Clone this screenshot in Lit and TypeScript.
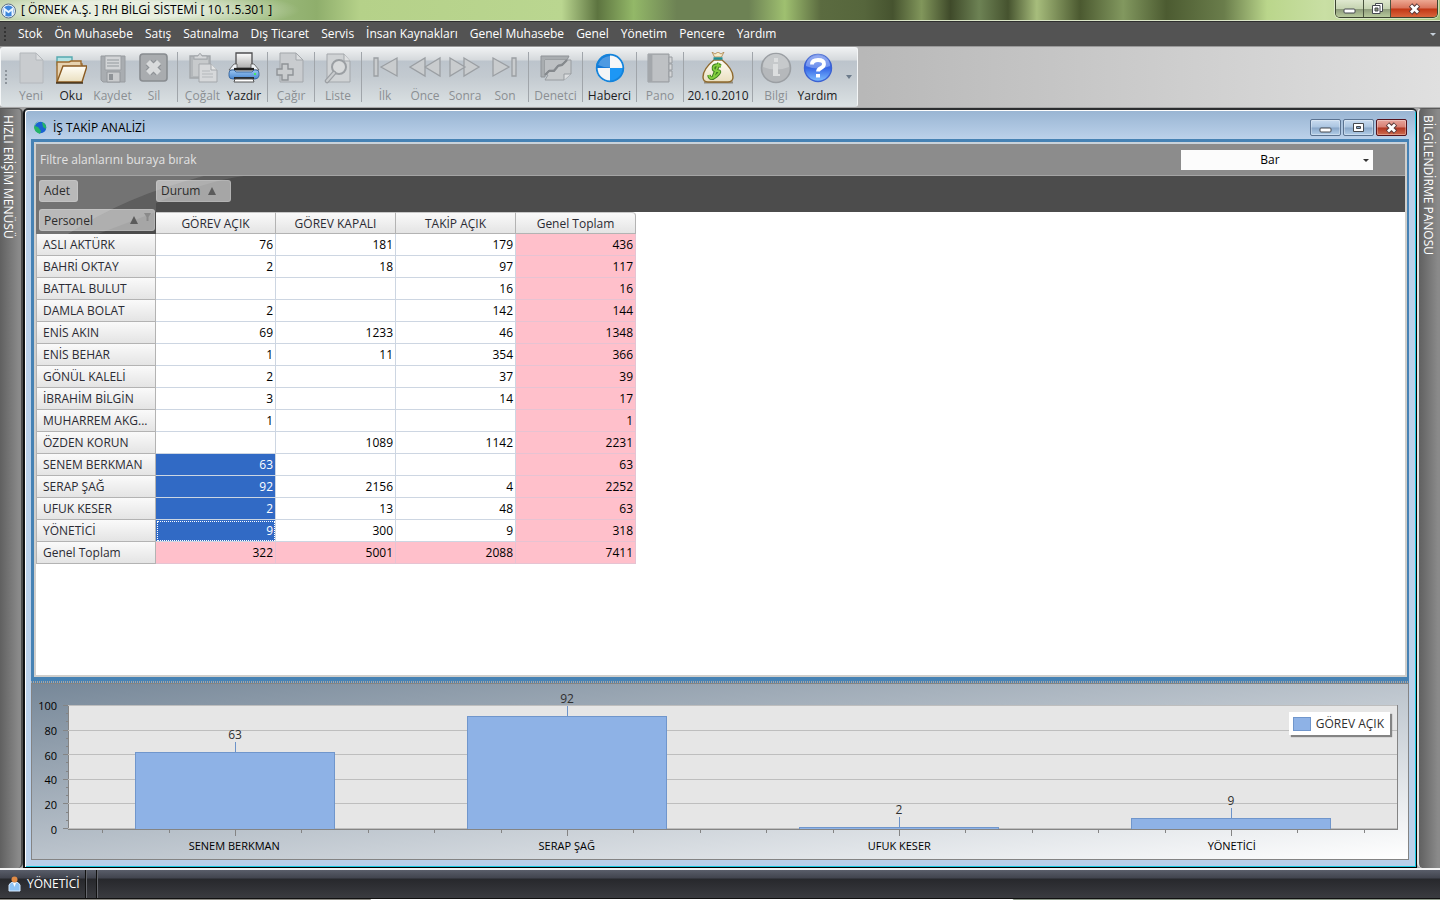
import { LitElement, html, css, svg } from "lit";
import { customElement } from "lit/decorators.js";
import { classMap } from "lit/directives/class-map.js";

const MENU = ["Stok", "Ön Muhasebe", "Satış", "Satınalma", "Dış Ticaret", "Servis", "İnsan Kaynakları", "Genel Muhasebe", "Genel", "Yönetim", "Pencere", "Yardım"];

type Tool = { id: string; label: string; size: string; on?: boolean };
const GROUPS: Tool[][] = [
  [
    { id: "new", label: "Yeni", size: "s" },
    { id: "open", label: "Oku", size: "s", on: true },
    { id: "save", label: "Kaydet", size: "m" },
    { id: "del", label: "Sil", size: "s" },
  ],
  [
    { id: "copy", label: "Çoğalt", size: "m" },
    { id: "print", label: "Yazdır", size: "s", on: true },
  ],
  [{ id: "call", label: "Çağır", size: "s" }],
  [{ id: "list", label: "Liste", size: "s" }],
  [
    { id: "first", label: "İlk", size: "s" },
    { id: "prev", label: "Önce", size: "s" },
    { id: "next", label: "Sonra", size: "s" },
    { id: "last", label: "Son", size: "s" },
  ],
  [{ id: "audit", label: "Denetci", size: "l" }],
  [{ id: "news", label: "Haberci", size: "l", on: true }],
  [{ id: "board", label: "Pano", size: "s" }],
  [{ id: "money", label: "20.10.2010", size: "xl", on: true }],
  [
    { id: "info", label: "Bilgi", size: "s" },
    { id: "help", label: "Yardım", size: "m", on: true },
  ],
];

const G = "#a3a7ab";
const F = "#c9ccce";
const ICONS: Record<string, unknown> = {
  new: svg`<path d="M5 1h16l7 7v23H5z" fill="#c9cccf" stroke="#b4b8bc"/><path d="M21 1v7h7z" fill="#dcdee0" stroke="#b4b8bc"/>`,
  open: svg`<path d="M2 5h15v8H2z" fill="#b5e3e4" stroke="#55a9b0" stroke-width="1.4"/><path d="M2 10h12l2-1h10v3h1v18H2z" fill="#e6d2b0" stroke="#9c6a2c" stroke-width="1.4"/><path d="M8 14h24l-5 16H2z" fill="url(#cream)" stroke="#8a5a20" stroke-width="1.4"/><path d="M1 31h27" stroke="#3b2c18" stroke-width="1.4"/>`,
  save: svg`<path d="M4 4h24v26H6l-2-2z" fill="#a9adb1" stroke="#989ca0"/><path d="M8 4h16v14H8z" fill="#d3d5d7" stroke="#9b9fa3"/><path d="M10 8h12M10 11h12M10 14h12" stroke="#a9adb1" stroke-width="1.3"/><path d="M10 20h13v10H10z" fill="#c9cbcd" stroke="#94989c"/><path d="M12 22h4v6h-4z" fill="#8f9397"/>`,
  del: svg`<rect x="2" y="2" width="27" height="27" rx="3" fill="#a9acaf" stroke="#888c90" stroke-width="1.6"/><path d="M10.500 10.500l10 10M20.500 10.500l-10 10" stroke="#8e9296" stroke-width="8"/><path d="M10 10l11 11M21 10L10 21" stroke="#d9dbdc" stroke-width="5.600"/>`,
  copy: svg`<path d="M3 4h20v22H3z" fill="#b4b8bb" stroke="${G}" stroke-width="1.4"/><path d="M7 7V4h4q2-5 4 0h5v3z" fill="#d5d7d9" stroke="${G}"/><path d="M6 8h15v16H6z" fill="#c7cacc"/><path d="M12 12h12l6 6v12H12z" fill="#d6d8da" stroke="${G}"/><path d="M24 12v6h6" fill="#e4e5e6" stroke="${G}"/><path d="M15 19h8M15 22h11M15 25h11" stroke="#b4b8bb"/>`,
  print: svg`<path d="M8 1h16v16H8z" fill="url(#grayv)" stroke="#4e4e50" stroke-width="1.3"/><path d="M6 12h3v4h14v-4h3l5 6H1z" fill="#eef2f6" stroke="#555" stroke-width=".8"/><path d="M6 17h20" stroke="#222" stroke-width="2.200"/><path d="M1 21q0-3 3-3h2l2 2h16l2-2h2q3 0 3 3v3q-1 3-4 3H5q-4 0-4-3z" fill="url(#blueb)" stroke="#2b5b95" stroke-width=".8"/><circle cx="27" cy="22" r="1" fill="#3f3"/><path d="M6 26h20" stroke="#222" stroke-width="1.800"/><path d="M7 27h18l1 3H6z" fill="#fff" stroke="#555"/>`,
  call: svg`<path d="M5 1h16l7 7v22H5z" fill="#c9cccf" stroke="${G}"/><path d="M21 1v7h7z" fill="#dcdee0" stroke="${G}"/><path d="M7 12h6v5h5v6h-5v5H7v-5H2v-6h5z" fill="${F}" stroke="#8f9397" stroke-width="1.4"/>`,
  list: svg`<path d="M5 2h17l6 7v21H5z" fill="#d0d3d5" stroke="${G}"/><path d="M22 2v7h6" fill="#e0e2e3" stroke="${G}"/><circle cx="17" cy="15" r="7" fill="#d8dadb" stroke="#9b9fa3" stroke-width="2"/><path d="M12 21l-7 8" stroke="#9b9fa3" stroke-width="4.500" stroke-linecap="round"/><path d="M12 21l-7 8" stroke="${F}" stroke-width="2" stroke-linecap="round"/>`,
  first: svg`<path d="M5 6h4v18H5zM12 15L28 6v18z" fill="${F}" stroke="#9b9fa3" stroke-width="1.300"/>`,
  prev: svg`<path d="M1 15L16 6v18zM16 15L31 6v18z" fill="${F}" stroke="#9b9fa3" stroke-width="1.300"/>`,
  next: svg`<path d="M1 6l15 9-15 9zM15 6l15 9-15 9z" fill="${F}" stroke="#9b9fa3" stroke-width="1.300"/>`,
  last: svg`<path d="M4 6l16 9-16 9zM23 6h4v18h-4z" fill="${F}" stroke="#9b9fa3" stroke-width="1.300"/>`,
  audit: svg`<path d="M1 4h28l-2 4H5v17H1z" fill="#a9adb0" stroke="#8f9397"/><path d="M5 8h21l-4 4-4 1-4 5-5 0-4 4z" fill="#bdc0c3"/><path d="M5 22l4-4h5l4-5 4-1 4-4h5v14l-7 6H5l3-5z" fill="#c6c9cb" stroke="#989ca0"/><path d="M5 23l4-4h5l4-5 4-1 5-5" fill="none" stroke="#85898d" stroke-width="2.200"/><path d="M24 28v-6h7" fill="#dcdee0" stroke="#989ca0"/>`,
  news: svg`<circle cx="16" cy="16" r="14" fill="#eef1f4"/><path d="M16 2A14 14 0 0 0 2 16h14z" fill="#1378d8"/><path d="M16 2A14 14 0 0 1 30 16H16zM2 16h14v14A14 14 0 0 1 2 16z" fill="#f4f5f6"/><path d="M16 30a14 14 0 0 0 14-14H16z" fill="#1d97f5"/><circle cx="16" cy="16" r="13.300" fill="none" stroke="#1583da" stroke-width="1.800"/><path d="M4 13a12.500 12.500 0 0 1 24 0q-12 5-24 0z" fill="#fff" opacity=".25"/>`,
  board: svg`<path d="M4 2h21v28H4z" fill="#b3b6b9" stroke="#989ca0"/><path d="M4 2h4v28H4z" fill="#a3a7ab"/><path d="M9 3h15v26H9z" fill="#bec1c4"/><path d="M25 5h3v6h-3zM25 12h3v6h-3zM25 19h3v6h-3z" fill="#d4d6d8" stroke="#989ca0"/>`,
  money: svg`<path d="M2 30.500h29" stroke="#5b4a2a" stroke-width="2" opacity=".5"/><path d="M10 0l2.500 5h7L22 0l-3 2-3-2-3 2z" fill="#f7ecc9" stroke="#a8824a" stroke-width=".8"/><path d="M12 8Q1 17 1 25q0 5 5 5h20q5 0 5-5Q31 17 20 8z" fill="url(#cream)" stroke="#8f6a2e" stroke-width="1.400"/><path d="M11.500 6.500h9" stroke="#1d8f93" stroke-width="2.400"/><path d="M19 14q-7-2-7.500 1.500t4 3.500-1.500 5-7-1M17 11L11 26" fill="none" stroke="#3d7d1e" stroke-width="3.600"/><path d="M19 14q-7-2-7.500 1.500t4 3.500-1.500 5-7-1M17 11L11 26" fill="none" stroke="#84cf3f" stroke-width="1.800"/>`,
  info: svg`<circle cx="16" cy="16" r="14.500" fill="#b5b8bb" stroke="#9b9fa3" stroke-width="1.600"/><path d="M3 15a13 13 0 0 1 26 0q-13 5-26 0z" fill="#c6c9cb"/><path d="M14 6h4v4h-4zM13 12h5v10h2v2h-7z" fill="#dcdedf"/>`,
  help: svg`<circle cx="16" cy="16" r="13.500" fill="url(#ball)" stroke="#3c62d2" stroke-width="1.400"/><path d="M4 14a12 12 0 0 1 24 0q-12 5-24 0z" fill="#fff" opacity=".28"/><path d="M10 12.500q0-4.500 6-4.500t6 4q0 2.500-3 4t-3 3.500" fill="none" stroke="#fff" stroke-width="3.800"/><path d="M14 22h4v3.500h-4z" fill="#fff"/>`,
};

const COLS = ["GÖREV AÇIK", "GÖREV KAPALI", "TAKİP AÇIK", "Genel Toplam"];
const ROWS: [string, string[]][] = [
  ["ASLI AKTÜRK", ["76", "181", "179", "436"]],
  ["BAHRİ OKTAY", ["2", "18", "97", "117"]],
  ["BATTAL BULUT", ["", "", "16", "16"]],
  ["DAMLA BOLAT", ["2", "", "142", "144"]],
  ["ENİS AKIN", ["69", "1233", "46", "1348"]],
  ["ENİS BEHAR", ["1", "11", "354", "366"]],
  ["GÖNÜL KALELİ", ["2", "", "37", "39"]],
  ["İBRAHİM BİLGİN", ["3", "", "14", "17"]],
  ["MUHARREM AKG...", ["1", "", "", "1"]],
  ["ÖZDEN KORUN", ["", "1089", "1142", "2231"]],
  ["SENEM BERKMAN", ["63", "", "", "63"]],
  ["SERAP ŞAĞ", ["92", "2156", "4", "2252"]],
  ["UFUK KESER", ["2", "13", "48", "63"]],
  ["YÖNETİCİ", ["9", "300", "9", "318"]],
  ["Genel Toplam", ["322", "5001", "2088", "7411"]],
];
const SELECTED = [10, 11, 12, 13];
const BARS = SELECTED.map((i) => ({ name: ROWS[i][0], value: Number(ROWS[i][1][0]) }));

@customElement("rh-toolbar")
class RhToolbar extends LitElement {
  static styles = css`
    :host { display: flex; background: linear-gradient(90deg, #a8a8a8, #b8b8b8 60%, #e0e0e0); }
    .bar { display: flex; align-items: stretch; height: 60px; box-sizing: border-box; border: 1px solid #f4f6f7; border-bottom-color: #d8dcdf; border-radius: 3px; padding-right: 4px; background: linear-gradient(#eff1f2 0, #d5d9dc 12px, #bcc4cc 13px, #c3cad0 50%, #dbe1e3 100%); }
    .grip { width: 10px; display: flex; align-items: center; }
    .grip svg { width: 7px; height: 16px; }
    .sep { width: 1px; margin: 4px 3px; background: #a0a5aa; }
    button { display: flex; flex-direction: column; align-items: center; gap: 3px; border: 0; padding: 4px 0 0; background: none; font: inherit; line-height: 18px; white-space: nowrap; color: #8b8f93; }
    button.on { color: #1d1d1f; }
    .s { width: 40px; } .m { width: 43px; } .l { width: 47px; } .xl { width: 62px; }
    .ico { width: 32px; height: 32px; display: block; }
    .more { width: 8px; margin-left: 6px; padding: 0; justify-content: center; }
    .more svg { width: 6px; height: 4px; }
  `;
  render() {
    const defs = svg`<defs>
      <linearGradient id="cream" x1="0" y1="0" x2="0" y2="1"><stop offset="0" stop-color="#fffdf6"/><stop offset="1" stop-color="#eadfbf"/></linearGradient>
      <linearGradient id="grayv" x1="0" y1="0" x2="0" y2="1"><stop offset="0" stop-color="#fdfdfd"/><stop offset="1" stop-color="#a9a9a9"/></linearGradient>
      <linearGradient id="blueb" x1="0" y1="0" x2="0" y2="1"><stop offset="0" stop-color="#9cc6f2"/><stop offset="1" stop-color="#4887d0"/></linearGradient>
      <linearGradient id="ball" x1="0" y1="0" x2="0" y2="1"><stop offset="0" stop-color="#6f8fee"/><stop offset=".5" stop-color="#3565e6"/><stop offset="1" stop-color="#7fc0ff"/></linearGradient></defs>`;
    return html`<div class="bar" role="toolbar" aria-label="Araçlar">
      <span class="grip"><svg viewBox="0 0 7 16"><path d="M4 1h2v2H4zM4 5h2v2H4zM4 9h2v2H4zM4 13h2v2H4z" fill="#8d949b"/></svg></span>
      ${GROUPS.map((g, i) => html`${i ? html`<span class="sep"></span>` : ""}${g.map((t) => html`
        <button type="button" class=${classMap({ [t.size]: true, on: !!t.on })} ?disabled=${!t.on}>
          <svg class="ico" viewBox="0 0 32 32">${defs}${ICONS[t.id]}</svg>${t.label}</button>`)}`)}
      <button type="button" class="more" aria-label="Diğer"><svg viewBox="0 0 6 4"><path d="M0 0h6L3 4z" fill="#6c7b8b"/></svg></button>
    </div>`;
  }
}

@customElement("rh-pivot")
class RhPivot extends LitElement {
  static styles = css`
    :host { display: flex; flex-direction: column; flex: 1; min-height: 0; position: relative; background: #fff; border: 2px solid #d0cfcc; border-top-color: #c9d2da; box-sizing: border-box; }
    .filter { display: flex; align-items: center; justify-content: space-between; height: 32px; box-sizing: border-box; border-bottom: 1px solid #a5a5a5; background: #8c8c8c; color: #e2e2e2; padding: 0 32px 0 4px; }
    .pick { position: relative; display: flex; width: 192px; }
    select { appearance: none; width: 100%; height: 20px; border: 0; border-radius: 0; background: #fcfcfc; color: #000; font: inherit; text-align: center; text-align-last: center; padding: 0 14px 0 0; }
    .pick svg { position: absolute; right: 4px; top: 9px; width: 6px; height: 3px; }
    .head { display: flex; align-items: flex-start; height: 36px; box-sizing: border-box; padding: 4px 3px; background: #4c4c4c; }
    .zone { width: 117px; }
    .field { position: relative; z-index: 1; display: inline-flex; align-items: center; gap: 8px; height: 22px; border: 1px solid #ffffff26; border-radius: 3px; padding: 0 7px 0 4px; font: inherit; color: #2c2c2c; background: #ffffff80; }
    .field svg { width: 8px; height: 8px; }
    .wide { width: 116px; padding-right: 3px; }
    .wide span { margin-right: auto; }
    .wide .fun { width: 7px; height: 14px; margin-left: -2px; }
    .durum { padding-right: 14px; }
    .swoosh { position: absolute; left: 0; top: 32px; width: 210px; height: 58px; pointer-events: none; }
    table { border-spacing: 0; table-layout: fixed; width: 600px; }
    th, td { width: 120px; height: 22px; box-sizing: border-box; padding: 0; line-height: 20px; white-space: nowrap; overflow: hidden; }
    th { font-weight: 400; color: #2b2b33; background: linear-gradient(#fafafa, #e4e4e4); border: solid #b3b3b3; border-width: 0 1px 1px 0; }
    tbody th { text-align: left; padding-left: 6px; border-left-width: 1px; }
    thead th { border-top: 1px solid #c8c8c8; line-height: 19px; position: relative; z-index: 1; }
    thead th:last-child { border-top-right-radius: 4px; }
    thead .corner { z-index: auto; position: static; background: #4c4c4c; border: 0; text-align: left; vertical-align: top; padding-left: 3px; overflow: visible; }
    .corner .field { display: flex; margin-top: -3px; }
    .corner div { height: 22px; }
    td { text-align: right; padding-right: 2px; color: #000; border: solid #cdd6e2; border-width: 0 1px 1px 0; }
    .total { background: #ffc0cb; border-color: #e6c3d2; }
    .sel { background: #316ac5; color: #fff; }
    .focus { outline: 1px dotted #fff; outline-offset: -2px; }
  `;
  render() {
    const up = html`<svg viewBox="0 0 8 8"><path d="M4 0l4 8H0z" fill="#5b5b5b"/></svg>`;
    return html`
      <div class="filter"><span>Filtre alanlarını buraya bırak</span>
        <span class="pick"><select aria-label="Grafik türü"><option>Bar</option></select><svg viewBox="0 0 6 3"><path d="M0 0h6L3 3z" fill="#333"/></svg></span></div>
      <div class="head"><div class="zone"><button type="button" class="field">Adet</button></div><button type="button" class="field durum">Durum ${up}</button></div>
      <table>
        <thead><tr><th class="corner"><div><button type="button" class="field wide"><span>Personel</span>${up}<svg class="fun" viewBox="0 0 7 14"><path d="M0 0h7L4.500 4v4h-2V4z" fill="#8a8a8a"/></svg></button></div></th>${COLS.map((c) => html`<th scope="col">${c}</th>`)}</tr></thead>
        <tbody>${ROWS.map(([name, vals], r) => html`<tr><th scope="row">${name}</th>${vals.map((v, c) => html`<td class=${classMap({ total: c === 3 || r === ROWS.length - 1, sel: c === 0 && SELECTED.includes(r), focus: c === 0 && r === 13 })}>${v}</td>`)}</tr>`)}</tbody>
      </table>
      <svg class="swoosh" viewBox="0 0 210 58"><path d="M0 0h168Q90 20 32 58H0z" fill="#fff" opacity=".22"/><path d="M168 0h40Q170 5 120 27v9Q88 48 62 58H32Q90 20 168 0z" fill="#fff" opacity=".1"/></svg>`;
  }
}

@customElement("rh-chart")
class RhChart extends LitElement {
  static styles = css`
    :host { display: grid; grid-template-columns: 36px 1fr; grid-template-rows: 125px 1fr; height: 177px; box-sizing: border-box; border: 1px solid #848484; padding: 21px 10px 0 0; background: linear-gradient(to bottom right, #778899, #fff); font-size: 11px; color: #000; }
    .scale { display: flex; flex-direction: column; justify-content: space-between; text-align: right; padding-right: 11px; margin: -7px 0; line-height: 15px; }
    .plot { position: relative; background: #e6e6e6; border: 1px solid #848484; box-sizing: border-box; display: grid; grid-template-columns: repeat(4, 1fr); grid-template-rows: 100%; }
    .lines { position: absolute; left: -6px; top: -1px; width: calc(100% + 7px); height: calc(100% + 8px); overflow: visible; }
    .cat { position: relative; display: flex; flex-direction: column; justify-content: flex-end; align-items: center; min-height: 0; }
    .val { line-height: 14px; color: #303030; font-size: 12px; flex: none; }
    .stem { width: 1px; height: 10px; background: #6c93c9; flex: none; }
    .bar { width: 60%; box-sizing: border-box; flex: none; background: #8eb2e6; border: 1px solid #7096cc; border-bottom: 0; }
    .names { grid-column: 2; display: grid; grid-template-columns: repeat(4, 1fr); text-align: center; padding-top: 8px; line-height: 16px; }
    .legend { position: absolute; right: 7px; top: 6px; display: flex; align-items: center; gap: 5px; height: 23px; padding: 0 6px 0 4px; background: #fff; box-shadow: 2px 2px 1px #848484; color: #303030; font-size: 12px; }
    .key { width: 16px; height: 12px; background: #8eb2e6; border: 1px solid #7096cc; }
    .tick { position: absolute; top: 100%; width: 1px; height: 3px; margin-top: 1px; background: #848484; }
    .mid { height: 6px; }
    .g { stroke: #bebebe; } .t { stroke: #848484; }
  `;
  render() {
    const major = [0, 20, 40, 60, 80, 100];
    const minor = [0, 1, 2, 3, 4].flatMap((k) => [k * 20 + 20 / 3, k * 20 + 40 / 3]);
    return html`
      <div class="scale">${[...major].reverse().map((v) => html`<span>${v}</span>`)}</div>
      <div class="plot">
        <svg class="lines" viewBox="0 0 100 132" preserveAspectRatio="none" shape-rendering="crispEdges">
          ${major.map((v) => svg`<path class="g" vector-effect="non-scaling-stroke" d="M0.400 ${124.5 - v * 1.24}H99.900"/>`)}
          ${major.map((v) => svg`<path class="t" vector-effect="non-scaling-stroke" d="M0 ${124.5 - v * 1.24}H0.400"/>`)}
          ${minor.map((v) => svg`<path class="t" vector-effect="non-scaling-stroke" d="M0.200 ${124.5 - v * 1.24}H0.400"/>`)}
        </svg>
        ${BARS.map((b) => html`<div class="cat"><span class="val">${b.value}</span><span class="stem"></span><span class="bar" style="height:${b.value}%"></span>
          ${[10, 30, 50, 70, 90].map((p) => html`<i class=${classMap({ tick: true, mid: p === 50 })} style="left:${p}%"></i>`)}</div>`)}
        <div class="legend"><span class="key"></span>GÖREV AÇIK</div>
      </div>
      <div class="names">${BARS.map((b) => html`<span>${b.name}</span>`)}</div>`;
  }
}

@customElement("app-root")
class AppRoot extends LitElement {
  static styles = css`
    :host { display: flex; flex-direction: column; height: 100vh; min-height: 640px; overflow: hidden; font: 12px/16px "Open Sans", "Noto Sans", sans-serif; color: #000; background: #a6a6a6; }
    .title { display: flex; align-items: center; height: 21px; box-sizing: border-box; border-bottom: 1px solid #dbe6c8; padding: 0 2px 0 1px; gap: 5px; flex: none;
      background: radial-gradient(ellipse 180px 22px at 120px 10px, #ffffffc0 40%, transparent), linear-gradient(90deg, #a9c28a 0, #9ab97a 19%, #8fae6c 22%, #b5d189 25%, #bad690 39%, #5d7440 41.500%, #93b868 44%, #6d8254 47%, #6d8254 52%, #9fc070 54.500%, #5b6b40 57%, #56663c 60%, #46532f 62%, #81965b 64%, #3f4a2a 66%, #6d8254 68%, #46532f 70%, #a7bd7c 72%, #4b5930 75%, #82985f 78%, #4c5b31 81%, #6a7d4b 85%, #bad68b 88%, #c9dfa4 92%, #a5c57c 100%); }
    .title svg { display: block; }
    .app { width: 15px; height: 17px; }
    h1, h2 { font: inherit; margin: 0; flex: 1; }
    .wbtn { display: flex; align-self: flex-start; height: 18px; border: 1px solid #3b4430; border-top: 0; border-radius: 0 0 5px 5px; box-sizing: border-box; overflow: hidden; box-shadow: 0 0 0 1px #ffffff70; }
    .wbtn button { border: 0; border-left: 1px solid #4b5440; width: 27px; padding: 0; display: flex; align-items: center; justify-content: center; background: linear-gradient(#dfe8cf 0, #c6d4b2 50%, #8c9a7a 52%, #b7c99c); }
    .wbtn button:first-child { border-left: 0; }
    .wbtn .x { width: 47px; background: linear-gradient(#eda892 0, #d9735a 48%, #c13614 52%, #d9653c); }
    nav { display: flex; align-items: center; height: 26px; flex: none; gap: 12px; padding: 0 4px 0 3px; background: #535353; border-top: 1px solid #2e2e2e; border-bottom: 1px solid #999; box-sizing: border-box; }
    nav a { color: #fff; text-decoration: none; white-space: nowrap; }
    nav .grip { width: 3px; height: 14px; }
    nav .more { width: 6px; height: 3px; margin-left: auto; }
    .desk { display: flex; flex: 1; min-height: 0; }
    .side { width: 23px; box-sizing: border-box; flex: none; border: 0; border-top: 1px solid #5a5a5a; border-right: 2px solid #4c4c4c; border-radius: 0 5px 5px 0; background: linear-gradient(90deg, #606060, #8a8a8a 90%); color: #fff; font: inherit; writing-mode: vertical-rl; text-align: left; padding: 6px 5px 0 0; line-height: 16px; margin-top: 1px; }
    .right { border-right: 0; border-left: 2px solid #e4e4e4; border-radius: 5px 0 0 5px; padding-right: 3px; }
    .win { flex: 1; min-width: 0; display: flex; flex-direction: column; margin-top: 1px; border: 2px solid #101214; border-top-color: #2c2e30; border-right: 1px solid #000; border-bottom: 1px solid #000; box-sizing: border-box; border-radius: 5px 5px 0 0; padding: 0 7px 7px 6px; background: linear-gradient(#98b4d2 0, #bbd1ea 29px, #bad0ea); box-shadow: inset 1px 1px #fff, inset -1px -1px #17c8e0; }
    .cap { display: flex; align-items: center; gap: 6px; height: 29px; padding: 6px 2px 0 3px; box-sizing: border-box; flex: none; }
    .globe { width: 13px; height: 13px; }
    .cap h2 { line-height: 20px; }
    .cbtns { display: flex; gap: 2px; }
    .cbtns button { width: 31px; height: 17px; box-sizing: border-box; border: 1px solid #5b7391; border-radius: 2px; padding: 0; display: flex; align-items: center; justify-content: center; background: linear-gradient(#c9dcf0 0, #aac4e0 48%, #88a6c8 52%, #b3cfe9); box-shadow: inset 0 0 0 1px #ffffff50; }
    .cbtns .x { border-color: #56121c; background: linear-gradient(#e7a49b 0, #d77f73 48%, #b13521 52%, #ce6d51); }
    .client { flex: 1; min-height: 0; display: flex; flex-direction: column; background: #4682b4; }
    .inner { flex: 1; min-height: 0; display: flex; padding: 3px 2px 4px 3px; }
    .split { height: 2px; background: repeating-linear-gradient(90deg, #a5a5a5 0 1px, #4682b4 1px 2px); }
    footer { display: flex; align-items: center; height: 31px; flex: none; box-sizing: border-box; border-top: 2px solid #f4f4f4; border-bottom: 1px solid #111; background: linear-gradient(#595d69 0, #41444e 8px, #27282c 9px, #3a3b40); color: #fff; padding: 0 8px; gap: 6px; }
    .edge { height: 1px; flex: none; background: linear-gradient(90deg, #8e8c86 25.700%, #fff 25.800% 70.300%, #8e9a8a 70.400%); }
    .usr { width: 13px; height: 16px; }
    .bar { width: 1px; height: 100%; background: #65676d; box-shadow: -1px 0 #111; }
    .bar + .bar { margin-left: 4px; }
  `;
  render() {
    const glyph = { min: svg`<rect x="1" y="6" width="11" height="4" rx="1" fill="#fff" stroke="#45494f"/>`,
      x: svg`<path d="M2.500 2l8 8M10.500 2l-8 8" stroke="#5b3a3a" stroke-width="4.800"/><path d="M3 2.500l7 7M10 2.500l-7 7" stroke="#fff" stroke-width="2.800"/>` };
    const ic = (c: unknown) => html`<svg width="13" height="12" viewBox="0 0 13 12">${c}</svg>`;
    return html`
      <header class="title">
        <svg class="app" viewBox="0 0 15 17"><circle cx="7.500" cy="9" r="7" fill="#e9f1fa" stroke="#5b6e84"/><circle cx="7.500" cy="9" r="5.500" fill="#3c86dc"/><path d="M3.500 13V7l4 3 4-3v6" fill="none" stroke="#e9f4ff" stroke-width="2"/></svg>
        <h1>[ ÖRNEK A.Ş. ] RH BİLGİ SİSTEMİ [ 10.1.5.301 ]</h1>
        <span class="wbtn"><button type="button" aria-label="Küçült">${ic(glyph.min)}</button><button type="button" aria-label="Geri yükle">${ic(svg`<path d="M4.500.500h7v8h-7z" fill="#fff" stroke="#45494f"/><path d="M1.500 2.500h7.500v8H1.500z" fill="#fff" stroke="#45494f"/><path d="M4 5h3v3H4z" fill="#8c9a7a" stroke="#45494f"/>`)}</button><button type="button" class="x" aria-label="Kapat">${ic(glyph.x)}</button></span>
      </header>
      <nav><svg class="grip" viewBox="0 0 3 14"><path d="M1 0h2v2H1zM1 4h2v2H1zM1 8h2v2H1zM1 12h2v2H1z" fill="#333"/></svg>${MENU.map((m) => html`<a href="#">${m}</a>`)}<svg class="more" viewBox="0 0 6 3"><path d="M0 0h6L3 3z" fill="#c6d0da"/></svg></nav>
      <rh-toolbar></rh-toolbar>
      <div class="desk">
        <button type="button" class="side">HIZLI ERİŞİM MENÜSÜ</button>
        <section class="win">
          <div class="cap"><svg class="globe" viewBox="0 0 13 13"><circle cx="6.500" cy="6.500" r="5.800" fill="#1a63d0"/><path d="M5 0Q1 2 1 5l3 1 3 4-1 3q-6-2-6-7 1-5 5-6zM8 1q5 2 4 7L9 6z" fill="#25b567"/></svg><h2>İŞ TAKİP ANALİZİ</h2>
            <span class="cbtns"><button type="button" aria-label="Küçült">${ic(glyph.min)}</button><button type="button" aria-label="Büyüt">${ic(svg`<path d="M1.500 1.500h10v8h-10z" fill="#fff" stroke="#45494f"/><path d="M4.500 4.500h4v2h-4z" fill="#88a6c8" stroke="#45494f"/>`)}</button><button type="button" class="x" aria-label="Kapat">${ic(glyph.x)}</button></span></div>
          <div class="client"><div class="inner"><rh-pivot></rh-pivot></div><div class="split"></div><rh-chart></rh-chart></div>
        </section>
        <button type="button" class="side right">BİLGİLENDİRME PANOSU</button>
      </div>
      <footer><svg class="usr" viewBox="0 0 13 16"><path d="M1 15V9q1-3 5.500-3T12 9v6z" fill="#8fc3f5" stroke="#d6eaff"/><path d="M5 7l1.500 4L8 7z" fill="#fff"/><circle cx="6.500" cy="3.500" r="3" fill="#e08a45"/></svg><span>YÖNETİCİ</span><span class="bar"></span><span class="bar"></span></footer>
      <div class="edge"></div>`;
  }
}
